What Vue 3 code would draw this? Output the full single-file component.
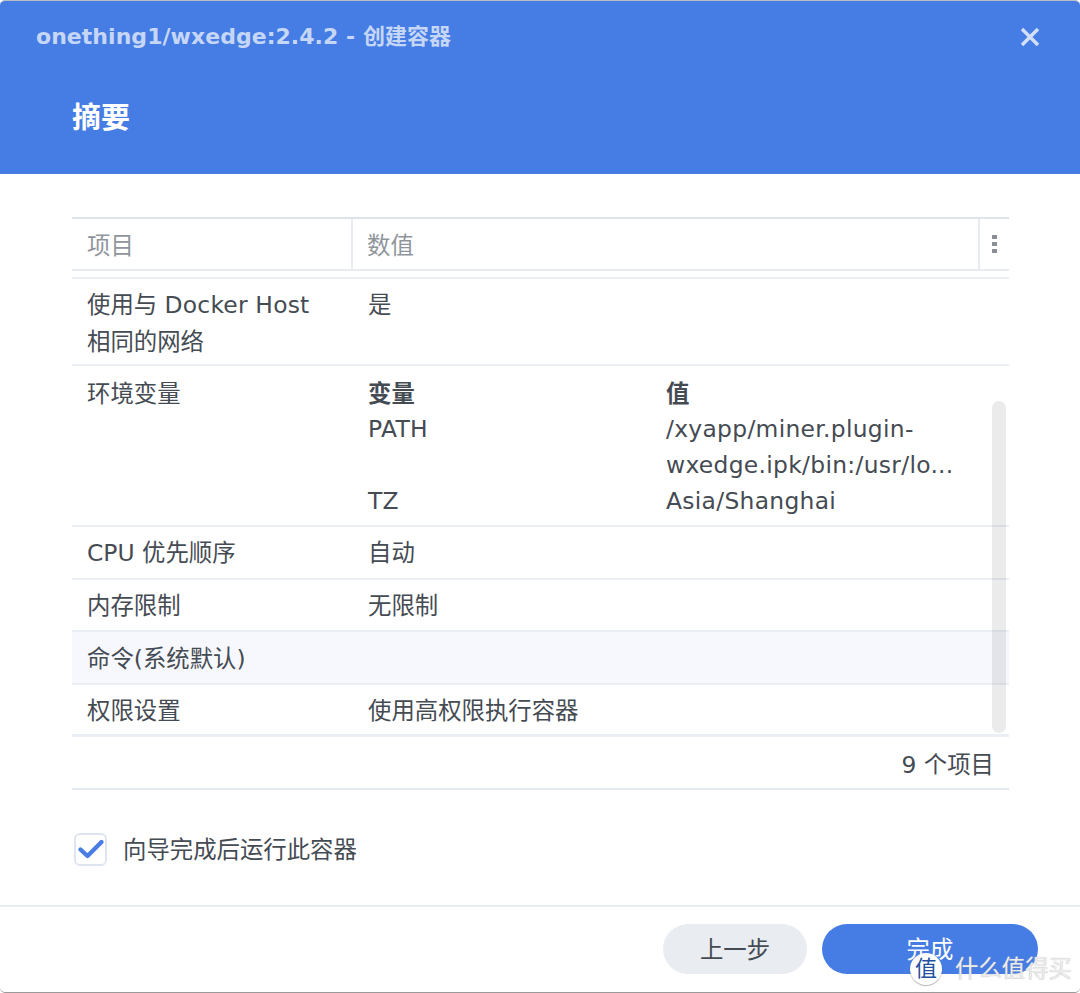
<script setup>
const envRows = [
  { name: 'PATH', value: '/xyapp/miner.plugin-', value2: 'wxedge.ipk/bin:/usr/lo...' },
  { name: 'TZ', value: 'Asia/Shanghai' },
]
</script>

<template>
  <div class="page">
    <header class="head">
      <div class="title-row">
        <span class="title">onething1/wxedge:2.4.2 - 创建容器</span>
        <svg class="close" width="20" height="20" viewBox="0 0 20 20">
          <path d="M2 2 L18 18 M18 2 L2 18" stroke="#d3dff8" stroke-width="3.4" fill="none" />
        </svg>
      </div>
      <h1 class="step">摘要</h1>
    </header>

    <main class="body">
      <div class="table">
        <div class="thead">
          <div class="th c1">项目</div>
          <div class="th c2">数值</div>
          <div class="th c3">
            <svg width="6" height="18" viewBox="0 0 6 18"><rect x="1" y="0" width="5" height="4" fill="#8a8f96" /><rect x="1" y="7" width="5" height="4" fill="#8a8f96" /><rect x="1" y="14" width="5" height="4" fill="#8a8f96" /></svg>
          </div>
        </div>
        <div class="tbody">
          <div class="row r1">
            <div class="k">使用与 <span class="latin">Docker Host</span><br />相同的网络</div>
            <div class="v">是</div>
          </div>
          <div class="row r2">
            <div class="k">环境变量</div>
            <div class="env">
              <b>变量</b><b>值</b>
              <template v-for="e in envRows" :key="e.name">
                <span>{{ e.name }}</span>
                <span>{{ e.value }}<template v-if="e.value2"><br />{{ e.value2 }}</template></span>
              </template>
            </div>
          </div>
          <div class="row r3"><div class="k">CPU 优先顺序</div><div class="v">自动</div></div>
          <div class="row r3"><div class="k">内存限制</div><div class="v">无限制</div></div>
          <div class="row r3 hi"><div class="k">命令(系统默认)</div><div class="v"></div></div>
          <div class="row r3 last"><div class="k">权限设置</div><div class="v">使用高权限执行容器</div></div>
          <div class="scroll"></div>
        </div>
        <div class="tfoot">9 个项目</div>
      </div>

      <label class="check">
        <span class="box">
          <svg width="28" height="22" viewBox="0 0 28 22"><path d="M3.5 11.5 L10.5 18 L24.5 4" stroke="#4a7de3" stroke-width="4.4" fill="none" stroke-linecap="round" stroke-linejoin="round" /></svg>
        </span>
        <span class="check-label">向导完成后运行此容器</span>
      </label>
    </main>

    <footer class="foot">
      <button class="btn sec">上一步</button>
      <button class="btn pri">完成</button>
    </footer>

    <div class="mark">
      <span class="seal">值</span>
      <span class="mark-text">什么值得买</span>
    </div>
  </div>
</template>

<style>
html, body { margin: 0; background: #fff; }
</style>

<style scoped>
.page {
  position: relative;
  width: 1080px;
  height: 993px;
  box-sizing: border-box;
  overflow: hidden;
  display: flex;
  flex-direction: column;
  background: #fff;
  border-top: 1px solid #b9bcc2;
  border-bottom: 1px solid #9a9a9a;
  border-radius: 5px;
  color: #454b53;
  font: 23.4px/36px "DejaVu Sans", "Noto Sans CJK SC", sans-serif;
}
.head {
  height: 173px;
  flex: none;
  box-sizing: border-box;
  background: #467de4;
  padding: 18px 36px 0;
}
.title-row { display: flex; justify-content: space-between; align-items: center; height: 36px; }
.title { font-weight: 700; font-size: 22px; color: #c6d6f6; letter-spacing: 0.04px; }
.close { margin-right: 4px; }
.step {
  margin: 40px 0 0 36px;
  font-size: 29px;
  line-height: 46px;
  font-weight: 700;
  color: #fff;
}
.body { flex: 1; padding: 43px 71px 0 72px; }
.table { position: relative; }
.thead {
  height: 50px;
  display: flex;
  border-top: 2px solid #dfe4ec;
  border-bottom: 2px solid #e8ecf2;
  color: #90959c;
}
.th { display: flex; align-items: center; box-sizing: border-box; padding-left: 15px; padding-top: 4px; }
.c1 { width: 281px; border-right: 2px solid #e8ecf2; }
.c2 { flex: 1; padding-left: 14px; border-right: 2px solid #e8ecf2; }
.c3 { width: 29px; padding-left: 11px; padding-top: 0; padding-bottom: 1px; }
.tbody { position: relative; margin-top: 6px; border-top: 2px solid #ebeef3; }
.row {
  display: flex;
  box-sizing: border-box;
  border-bottom: 2px solid #ebeef3;
}
.k { width: 281px; box-sizing: border-box; padding-left: 15px; flex: none; }
.v { flex: 1; padding-left: 15px; }
.latin { letter-spacing: 0.2px; }
.r1 { height: 87px; padding-top: 8px; line-height: 37px; }
.r2 { height: 161px; padding-top: 10px; }
.r3 { height: 52.6px; padding-top: 8.4px; }
.hi { background: #f7f8fd; }
.last { border-bottom-width: 3px; height: 52.4px; }
.env {
  flex: 1;
  padding-left: 15px;
  display: grid;
  grid-template-columns: 298px 1fr;
  grid-auto-rows: min-content;
}
.env b { font-weight: 700; line-height: 36px; }
.env span { line-height: 36px; position: relative; top: -1px; letter-spacing: 0.3px; }
.scroll {
  position: absolute;
  top: 122px;
  left: 920px;
  width: 14px;
  height: 332px;
  border-radius: 7px;
  background: rgba(0, 0, 0, 0.08);
}
.tfoot {
  height: 53px;
  box-sizing: border-box;
  border-bottom: 2px solid #e4e8ef;
  text-align: right;
  padding-right: 15px;
  line-height: 57px;
}
.check { display: flex; align-items: center; gap: 16px; margin: 40px 0 0 2px; }
.check-label { padding-top: 2px; }
.box {
  width: 33px;
  height: 33px;
  box-sizing: border-box;
  border: 2px solid #dfe5f0;
  border-radius: 6px;
  display: flex;
  align-items: center;
  justify-content: center;
}
.foot {
  height: 87px;
  flex: none;
  box-sizing: border-box;
  border-top: 2px solid #e8ecf3;
  display: flex;
  justify-content: flex-end;
  gap: 15px;
  padding: 17px 42px 0 0;
}
.btn {
  height: 50px;
  border: 0;
  border-radius: 25px;
  font: inherit;
  padding: 2px 0 0;
}
.sec { width: 144px; background: #e9ecf1; color: #454b53; }
.pri { width: 216px; background: #467de4; color: #fff; }
.mark {
  position: absolute;
  left: 910px;
  top: 952px;
  display: flex;
  align-items: center;
  gap: 13px;
  font-size: 23.4px;
  line-height: 32px;
  white-space: nowrap;
}
.mark-text {
  color: #ececec;
  text-shadow: 0 0 1px #a8a8a8;
}
.seal {
  width: 32px;
  height: 32px;
  border-radius: 50%;
  background: #fff;
  color: #24509f;
  font-size: 22px;
  line-height: 32px;
  text-align: center;
  box-shadow: 0 1px 1px rgba(0,0,0,.3);
}
</style>
